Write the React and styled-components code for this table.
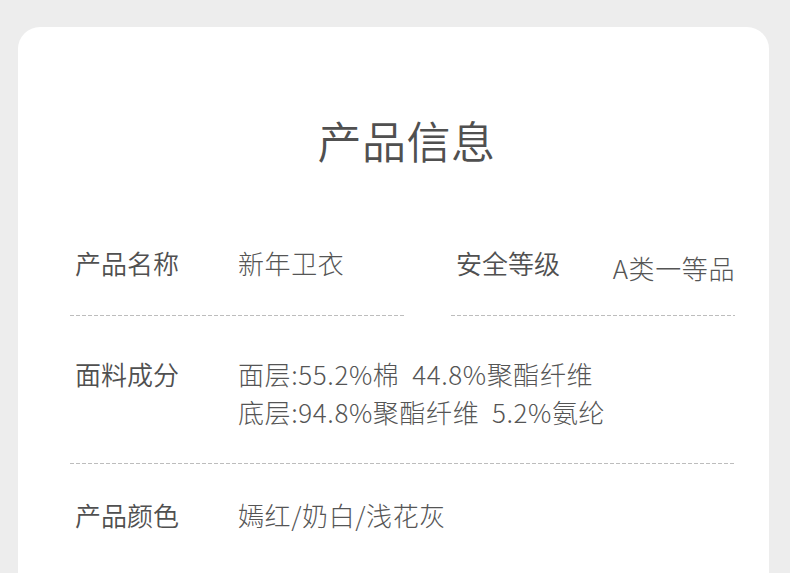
import React from "react";
import styled, { createGlobalStyle } from "styled-components";

const Global = createGlobalStyle`
  html, body { margin: 0; padding: 0; background: #ededed; }
  body { font-family: "Noto Sans CJK SC", "Noto Sans", sans-serif; }
`;

const Page = styled.div`
  padding: 27px 21px 0 18px;
  height: 573px;
  box-sizing: border-box;
  overflow: hidden;
`;

const Card = styled.section`
  background: #ffffff;
  border-radius: 22px 22px 0 0;
  min-height: 600px;
  padding: 83px 34px 0 52px;
  color: #555555;
`;

const Title = styled.h1`
  margin: 0 0 40px;
  text-align: center;
  font-size: 44px;
  line-height: 60px;
  font-weight: 350;
  letter-spacing: 0.5px;
  color: #505050;
  padding-left: 8px;
`;

const PairGrid = styled.div`
  display: grid;
  grid-template-columns: 335px 1fr;
  column-gap: 46px;
`;

const Row = styled.div`
  display: flex;
  align-items: flex-start;
  padding: ${(p) => p.$pt}px 0 ${(p) => p.$pb}px 5px;
  justify-content: ${(p) => (p.$spread ? "space-between" : "flex-start")};
  background-image: ${(p) =>
    p.$last
      ? "none"
      : "repeating-linear-gradient(to right, #bdbdbd 0 4px, transparent 4px 6px)"};
  background-size: 100% 1px;
  background-position: left bottom;
  background-repeat: no-repeat;
`;

const Label = styled.div`
  font-size: 26px;
  line-height: ${(p) => p.$lh || 38}px;
  width: ${(p) => (p.$auto ? "auto" : "163px")};
  flex: none;
  font-weight: 350;
  color: #505050;
`;

const Value = styled.div`
  font-size: 26px;
  line-height: ${(p) => p.$lh || 38}px;
  white-space: pre;
  letter-spacing: 0.6px;
  font-weight: 300;
  color: #555555;
  padding-top: ${(p) => p.$shift || 0}px;
`;

export default function App() {
  return (
    <>
      <Global />
      <Page>
        <Card>
          <Title>产品信息</Title>
          <PairGrid>
            <Row $pt={34} $pb={29}>
              <Label>产品名称</Label>
              <Value>新年卫衣</Value>
            </Row>
            <Row $pt={34} $pb={29} $spread>
              <Label $auto>安全等级</Label>
              <Value $shift={5}>A类一等品</Value>
            </Row>
          </PairGrid>
          <Row $pt={39} $pb={33}>
            <Label>面料成分</Label>
            <Value>
              {"面层:55.2%棉  44.8%聚酯纤维\n底层:94.8%聚酯纤维  5.2%氨纶"}
            </Value>
          </Row>
          <Row $pt={32} $pb={40} $last>
            <Label>产品颜色</Label>
            <Value>嫣红/奶白/浅花灰</Value>
          </Row>
        </Card>
      </Page>
    </>
  );
}
